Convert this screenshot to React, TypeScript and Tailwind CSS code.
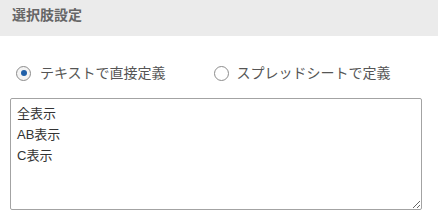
export default function App() {
  const font = { fontFamily: '"Liberation Sans", "Noto Sans CJK JP", sans-serif' };
  return (
    <div className="w-[438px] h-[216px] bg-white" style={font}>
      {/* ヘッダー */}
      <div className="h-9 bg-[#ebebeb] pl-3 pt-[5px]">
        <h2 className="text-[14px] leading-5 font-bold text-[#666]">選択肢設定</h2>
      </div>

      {/* ラジオ */}
      <div className="flex items-center h-[30px] mt-[22px] pl-4">
        <label className="flex items-center gap-[9px] text-[14px] text-[#555]">
          <span className="w-[15px] h-[15px] rounded-full border border-[#8c8c8c] bg-[#f4f4f4] flex items-center justify-center">
            <span className="w-[6px] h-[6px] rounded-full bg-[#1f5fa8]" />
          </span>
          テキストで直接定義
        </label>
        <label className="flex items-center gap-[8px] text-[14px] text-[#555] ml-[48px]">
          <span className="w-[15px] h-[15px] rounded-full border border-[#8c8c8c] bg-white" />
          スプレッドシートで定義
        </label>
      </div>

      {/* テキストエリア */}
      <div className="pl-[10px] mt-[10px]">
        <textarea
          className="block w-[412px] h-[112px] border border-[#a3a3a3] rounded-[2px] px-[6px] pt-[4px] text-[13px] leading-[21px] text-[#333] outline-none"
          style={font}
          defaultValue={'全表示\nAB表示\nC表示'}
        />
      </div>
    </div>
  );
}
